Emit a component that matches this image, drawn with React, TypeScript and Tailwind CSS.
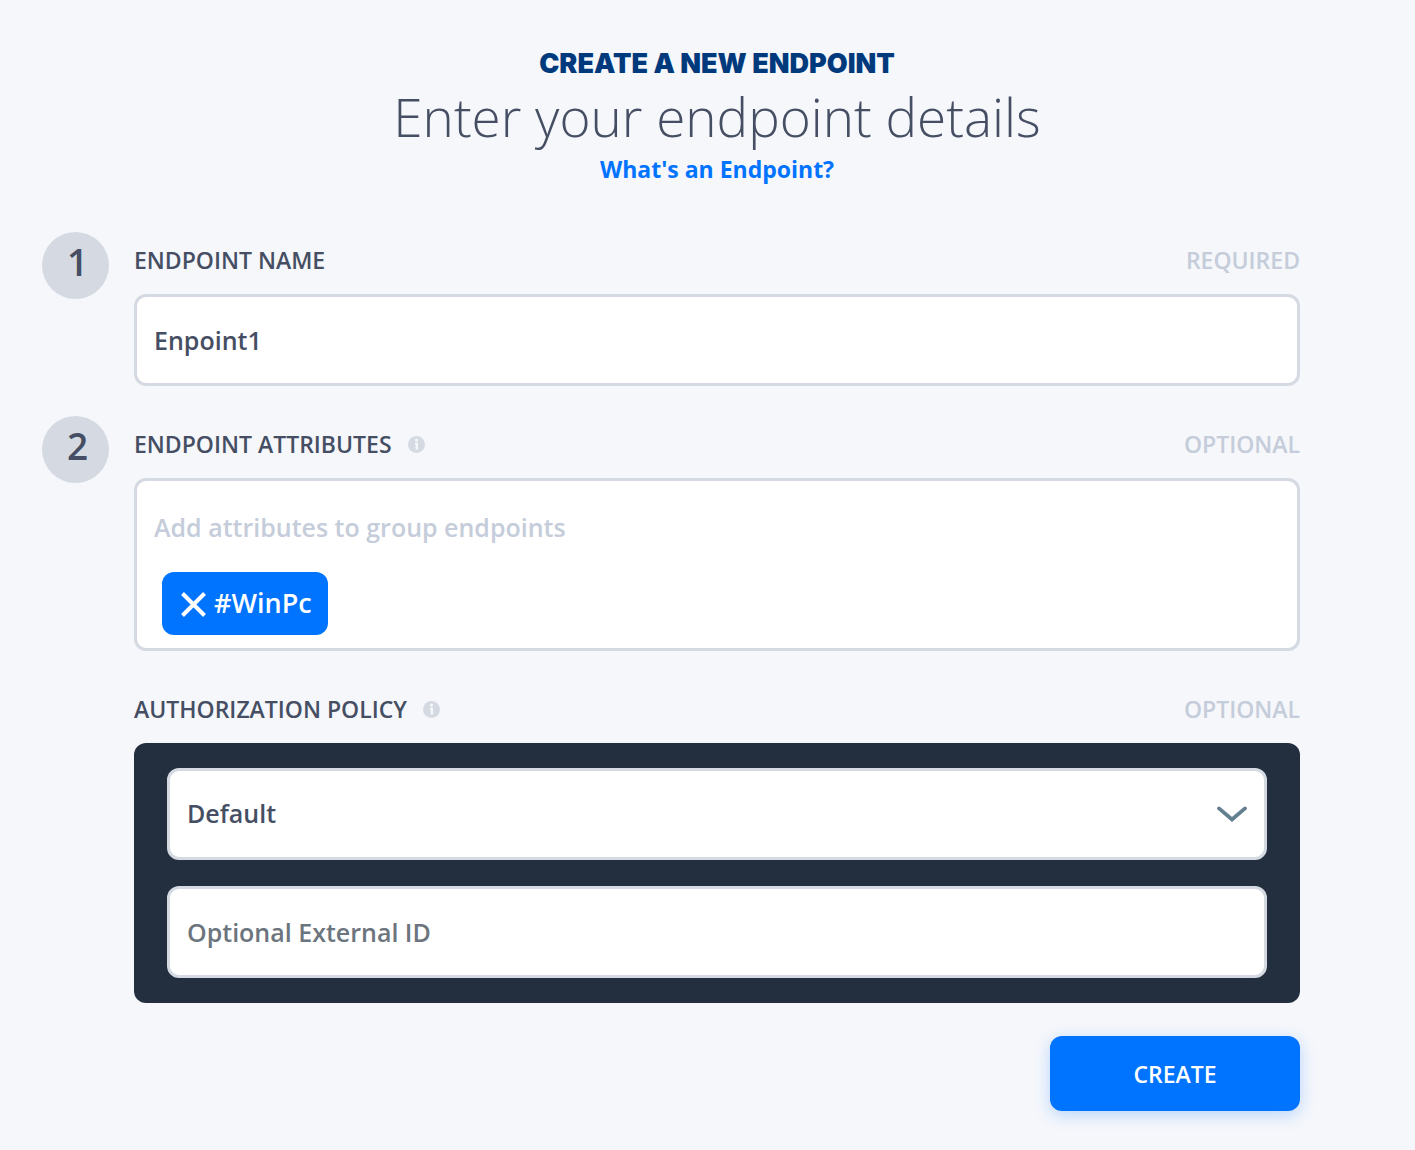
import { useState } from "react";
import type { ReactNode } from "react";

const fieldClass =
  "block w-full h-[92px] rounded-xl border-3 border-[#d5dae2] bg-white px-[17px] text-[25px] font-semibold text-[#454e63] focus:outline-none focus:border-[#0073ff]";

function InfoIcon() {
  return (
    <svg viewBox="0 0 17 17" className="size-[17px]" aria-hidden="true">
      <circle cx="8.5" cy="8.5" r="8.5" fill="#d5dae2" />
      <circle cx="8.5" cy="4.1" r="1.6" fill="#f5f7fb" />
      <path d="M7 6.8h3v6.6H7.6V8.4H7z" fill="#f5f7fb" />
    </svg>
  );
}

function StepNumber({ children }: { children: ReactNode }) {
  return (
    <div className="flex size-[67px] items-center justify-center rounded-full bg-[#d5dae2] pb-2 pl-1 text-[37px] font-semibold text-[#454e63]">
      {children}
    </div>
  );
}

type FieldHeaderProps = {
  htmlFor: string;
  label: string;
  note: string;
  info?: boolean;
};

function FieldHeader({ htmlFor, label, note, info }: FieldHeaderProps) {
  return (
    <div className="flex h-[62px] items-start justify-between pt-3 text-[23px] leading-8 font-semibold">
      <div className="flex items-center gap-4">
        <label htmlFor={htmlFor} className="text-[#454e63]">
          {label}
        </label>
        {info && <InfoIcon />}
      </div>
      <span className="text-[#c5ccda]">{note}</span>
    </div>
  );
}

export default function App() {
  const [name, setName] = useState("Enpoint1");
  const [attribute, setAttribute] = useState("");
  const [tags, setTags] = useState(["WinPc"]);
  const [policy, setPolicy] = useState("default");
  const [externalId, setExternalId] = useState("");

  const handleAddTag = (e: React.KeyboardEvent<HTMLInputElement>) => {
    if (e.key !== "Enter") return;
    e.preventDefault();
    const value = attribute.trim();
    if (value && !tags.includes(value)) setTags([...tags, value]);
    setAttribute("");
  };

  return (
    <main className="min-h-screen bg-[#f5f7fb] pt-12 pr-[115px] pb-[39px] pl-[42px] font-['Open_Sans',sans-serif]">
      <form onSubmit={(e) => e.preventDefault()}>
        {/* Header */}
        <header className="mb-[47px] pl-[92px] text-center">
          <h1 className="font-['Inter',sans-serif] text-[27px] leading-8 font-black text-[#003a7d]">
            CREATE A NEW ENDPOINT
          </h1>
          <p className="text-[53px] leading-[73px] font-light text-[#454e63]">
            Enter your endpoint details
          </p>
          <a href="#endpoint-help" className="block text-[23px] leading-8 font-bold text-[#0073ff]">
            What's an Endpoint?
          </a>
        </header>

        <div className="grid grid-cols-[67px_minmax(0,1fr)] gap-x-[25px] gap-y-[30px]">
          {/* Endpoint name */}
          <StepNumber>1</StepNumber>
          <div>
            <FieldHeader htmlFor="name" label="ENDPOINT NAME" note="REQUIRED" />
            <input
              id="name"
              type="text"
              value={name}
              onChange={(e) => setName(e.target.value)}
              className={fieldClass}
            />
          </div>

          {/* Endpoint attributes */}
          <StepNumber>2</StepNumber>
          <div>
            <FieldHeader htmlFor="attributes" label="ENDPOINT ATTRIBUTES" note="OPTIONAL" info />
            <div className="rounded-xl border-3 border-[#d5dae2] bg-white pb-[13px]">
              <input
                id="attributes"
                type="text"
                value={attribute}
                onChange={(e) => setAttribute(e.target.value)}
                onKeyDown={handleAddTag}
                placeholder="Add attributes to group endpoints"
                className="block h-[91px] w-full px-[17px] text-[25px] font-semibold text-[#454e63] placeholder:text-[#c5ccda] focus:outline-none"
              />
              <div className="flex flex-wrap gap-3 px-[25px]">
                {tags.map((tag) => (
                  <button
                    key={tag}
                    type="button"
                    aria-label={`Remove ${tag}`}
                    onClick={() => setTags(tags.filter((t) => t !== tag))}
                    className="flex h-[63px] items-center gap-[6px] rounded-xl bg-[#0073ff] px-4 text-[27px] font-semibold text-white"
                  >
                    <svg viewBox="0 0 30 30" className="size-[30px]" aria-hidden="true">
                      <path d="M4.5 4.5l22 22M26.5 4.5l-22 22" stroke="currentColor" strokeWidth="4" />
                    </svg>
                    #{tag}
                  </button>
                ))}
              </div>
            </div>
          </div>

          {/* Authorization policy */}
          <div className="col-start-2">
            <FieldHeader htmlFor="policy" label="AUTHORIZATION POLICY" note="OPTIONAL" info />
            <div className="flex flex-col gap-[26px] rounded-xl bg-[#232f3f] px-[33px] py-[25px]">
              <div className="relative">
                <select
                  id="policy"
                  value={policy}
                  onChange={(e) => setPolicy(e.target.value)}
                  className={`${fieldClass} appearance-none`}
                >
                  <option value="default">Default</option>
                </select>
                <svg
                  viewBox="0 0 30 16"
                  className="pointer-events-none absolute top-[38px] right-5 h-4 w-[30px]"
                  fill="none"
                  aria-hidden="true"
                >
                  <path d="M2 2.4l13 11L28 2.4" stroke="#647f8f" strokeWidth="3.8" strokeLinecap="round" />
                </svg>
              </div>
              <input
                type="text"
                aria-label="Optional External ID"
                placeholder="Optional External ID"
                value={externalId}
                onChange={(e) => setExternalId(e.target.value)}
                className={`${fieldClass} placeholder:text-[#6c757d]`}
              />
            </div>
          </div>
        </div>

        <div className="mt-[33px] flex justify-end">
          <button
            type="submit"
            className="h-[75px] w-[250px] rounded-xl bg-[#0073ff] pt-0.5 text-[23px] font-semibold text-white shadow-[0_4px_16px_rgba(0,115,255,0.25)]"
          >
            CREATE
          </button>
        </div>
      </form>
    </main>
  );
}
